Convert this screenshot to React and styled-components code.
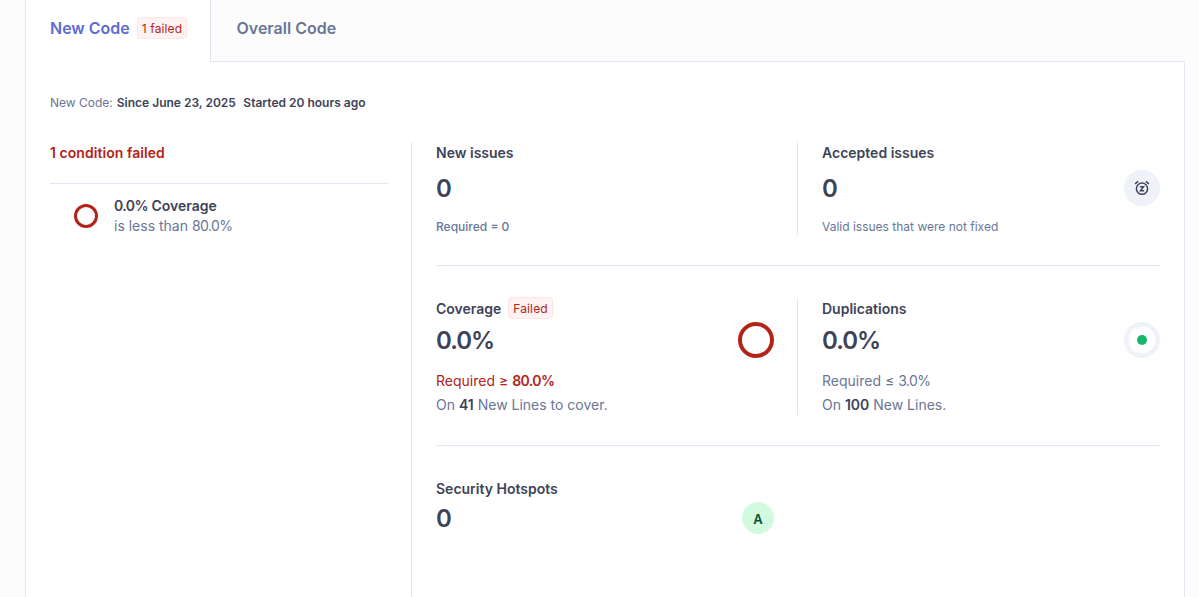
import React from 'react';
import styled, { createGlobalStyle } from 'styled-components';

const c = {
  page: '#fcfcfd',
  border: '#e1e6f3',
  text: '#3e4357',
  subdued: '#697696',
  primary: '#5d6cd0',
  red: '#b42318',
};

const GlobalStyle = createGlobalStyle`
  *, *::before, *::after { box-sizing: border-box; }
  body {
    margin: 0;
    background: ${c.page};
    color: ${c.text};
    font-family: Inter, "Liberation Sans", sans-serif;
    font-size: 14px;
    line-height: 20px;
    overflow: hidden;
  }
`;

const Page = styled.main`
  display: flex;
  flex-direction: column;
  height: 597px;
  padding: 0 14px 0 25px;
`;

const Tabs = styled.nav`
  display: flex;
  flex: none;
  height: 62px;
`;

const Tab = styled.button`
  display: flex;
  align-items: flex-start;
  gap: 7px;
  width: ${(p) => (p.$active ? '185px' : 'auto')};
  flex: ${(p) => (p.$active ? 'none' : '1')};
  padding: 17px 0 0 ${(p) => (p.$active ? '24px' : '25.5px')};
  border: solid ${c.border};
  border-width: ${(p) => (p.$active ? '0 0 0 1px' : '0 0 1px 1px')};
  background: ${(p) => (p.$active ? '#fff' : c.page)};
  color: ${(p) => (p.$active ? c.primary : c.subdued)};
  font: 600 16px/23px Inter, "Liberation Sans", sans-serif;
`;

const Badge = styled.span`
  height: 22px;
  padding: 0 4px;
  border: 1px solid #fee4e2;
  border-radius: 4px;
  background: #fef3f2;
  color: ${c.red};
  font-size: 12px;
  font-weight: 400;
  letter-spacing: 0.12px;
  line-height: 21px;
  white-space: nowrap;
`;

const Panel = styled.section`
  display: flex;
  flex-direction: column;
  flex: 1;
  min-height: 0;
  padding: 32px 24px 0;
  border: solid ${c.border};
  border-width: 0 1px;
  background: #fff;
`;

const Period = styled.div`
  display: flex;
  flex: none;
  height: 48px;
  font-size: 12px;
  line-height: 18px;
  color: ${c.subdued};

  strong { margin-left: 4px; color: ${c.text}; font-weight: 600; }
  strong + strong { margin-left: 7.5px; }
`;

const Columns = styled.div`
  display: flex;
  flex: 1;
  min-height: 0;
`;

const Conditions = styled.aside`
  width: 362px;
  flex: none;
  padding-right: 23px;
  border-right: 1px solid ${c.border};
`;

const ConditionsTitle = styled.h2`
  height: 42px;
  margin: 0;
  padding-top: 1px;
  border-bottom: 1px solid ${c.border};
  color: ${c.red};
  font-size: 14px;
  font-weight: 600;
  letter-spacing: 0.05px;
`;

const Condition = styled.div`
  display: flex;
  align-items: center;
  gap: 16px;
  padding: 12px 24px;
`;

const Ring = styled.span`
  flex: none;
  width: ${(p) => p.$size}px;
  height: ${(p) => p.$size}px;
  border: ${(p) => p.$stroke}px solid ${c.red};
  border-radius: 50%;
`;

const Stack = styled.div`
  display: flex;
  flex-direction: column;
`;

const Strong = styled.strong`
  color: ${(p) => (p.$inherit ? 'inherit' : c.text)};
  font-weight: 600;
`;

const Muted = styled.span`
  color: ${c.subdued};
`;

const Percent = styled.span`
  letter-spacing: -0.04em;
`;

const Measures = styled.div`
  flex: 1;
  padding-left: 24px;
`;

const MeasureRow = styled.div`
  display: grid;
  grid-template-columns: 362px 362px;
  grid-template-rows: 100%;
  height: ${(p) => p.$height}px;
  margin-bottom: ${(p) => (p.$last ? 0 : 32)}px;
  padding-bottom: ${(p) => (p.$last ? 0 : 30)}px;
  border-bottom: ${(p) => (p.$last ? '0' : `1px solid ${c.border}`)};
`;

const Measure = styled.article`
  display: flex;
  flex-direction: column;
  min-height: 0;
  padding-left: ${(p) => (p.$second ? '24px' : '0')};
  padding-right: ${(p) => (p.$second ? '0' : '23px')};
  border-right: ${(p) => (p.$second ? '0' : `1px solid ${p.$divided ? c.border : 'transparent'}`)};
`;

const Title = styled.h3`
  display: flex;
  flex: none;
  align-items: flex-start;
  gap: 7px;
  height: 23px;
  margin: -1px 0 0;
  font-size: 14px;
  font-weight: 600;
  line-height: 23px;
`;

const ValueRow = styled.div`
  display: flex;
  flex: none;
  align-items: center;
  justify-content: space-between;
  height: 36px;
  margin-top: ${(p) => p.$gap}px;
`;

const Value = styled.span`
  padding-top: 2px;
  font-size: 24px;
  font-weight: 600;
  line-height: 32px;
`;

const Note = styled.div`
  flex: none;
  margin-top: ${(p) => p.$gap}px;
  color: ${(p) => (p.$failed ? c.red : c.subdued)};
  font-size: ${(p) => (p.$small ? '12px' : '14px')};
  font-weight: ${(p) => (p.$medium ? 500 : 400)};
  line-height: 20px;
`;

const IconDisc = styled.span`
  display: grid;
  place-items: center;
  width: 36px;
  height: 36px;
  border-radius: 50%;
  background: #eff2f9;
`;

const Rating = styled.span`
  width: 32px;
  height: 32px;
  padding-top: 1px;
  border-radius: 50%;
  background: #d1fadf;
  color: #054f31;
  font-size: 13px;
  font-weight: 600;
  line-height: 32px;
  text-align: center;
`;

const Snooze = () => (
  <svg width="16" height="16" viewBox="0 0 16 16" fill="none" stroke={c.text} strokeWidth="1.5">
    <circle cx="8" cy="8.7" r="5.6" />
    <path d="M1.1 3.9 4.1 1.4M14.9 3.9 11.9 1.4" />
    <path d="M5.9 6.7H9.6L6.4 10.7H10.1" strokeWidth="1.4" />
  </svg>
);

const Duplication = () => (
  <svg width="36" height="36" viewBox="0 0 36 36" fill="none">
    <circle cx="18" cy="18" r="15.75" stroke="#eff2f9" strokeWidth="4.5" />
    <circle cx="18" cy="18" r="5" fill="#12b76a" />
  </svg>
);

export default function App() {
  return (
    <>
      <GlobalStyle />
      <Page>
        <Tabs>
          <Tab $active>New Code <Badge>1 failed</Badge></Tab>
          <Tab>Overall Code</Tab>
        </Tabs>
        <Panel>
          <Period>
            New Code: <strong>Since June 23, 2025</strong>
            <strong>Started 20 hours ago</strong>
          </Period>
          <Columns>
            <Conditions>
              <ConditionsTitle>1 condition failed</ConditionsTitle>
              <Condition>
                <Ring $size={24} $stroke={3} />
                <Stack>
                  <Strong><Percent>0.0%</Percent> Coverage</Strong>
                  <Muted>is less than <Percent>80.0%</Percent></Muted>
                </Stack>
              </Condition>
            </Conditions>
            <Measures>
              <MeasureRow $height={124}>
                <Measure $divided>
                  <Title>New issues</Title>
                  <ValueRow $gap={6}><Value>0</Value></ValueRow>
                  <Note $gap={11} $small $medium>Required = 0</Note>
                </Measure>
                <Measure $second>
                  <Title>Accepted issues</Title>
                  <ValueRow $gap={6}>
                    <Value>0</Value>
                    <IconDisc><Snooze /></IconDisc>
                  </ValueRow>
                  <Note $gap={11} $small>Valid issues that were not fixed</Note>
                </Measure>
              </MeasureRow>
              <MeasureRow $height={148}>
                <Measure $divided>
                  <Title>Coverage <Badge>Failed</Badge></Title>
                  <ValueRow $gap={2}>
                    <Value><Percent>0.0%</Percent></Value>
                    <Ring $size={36} $stroke={4} />
                  </ValueRow>
                  <Note $gap={13} $failed>Required ≥ <Strong $inherit><Percent>80.0%</Percent></Strong></Note>
                  <Note $gap={4}>On <Strong>41</Strong> New Lines to cover.</Note>
                </Measure>
                <Measure $second>
                  <Title>Duplications</Title>
                  <ValueRow $gap={2}>
                    <Value><Percent>0.0%</Percent></Value>
                    <Duplication />
                  </ValueRow>
                  <Note $gap={13}>Required ≤ <Percent>3.0%</Percent></Note>
                  <Note $gap={4}>On <Strong>100</Strong> New Lines.</Note>
                </Measure>
              </MeasureRow>
              <MeasureRow $height={100} $last>
                <Measure>
                  <Title>Security Hotspots</Title>
                  <ValueRow $gap={0}>
                    <Value>0</Value>
                    <Rating>A</Rating>
                  </ValueRow>
                </Measure>
              </MeasureRow>
            </Measures>
          </Columns>
        </Panel>
      </Page>
    </>
  );
}
